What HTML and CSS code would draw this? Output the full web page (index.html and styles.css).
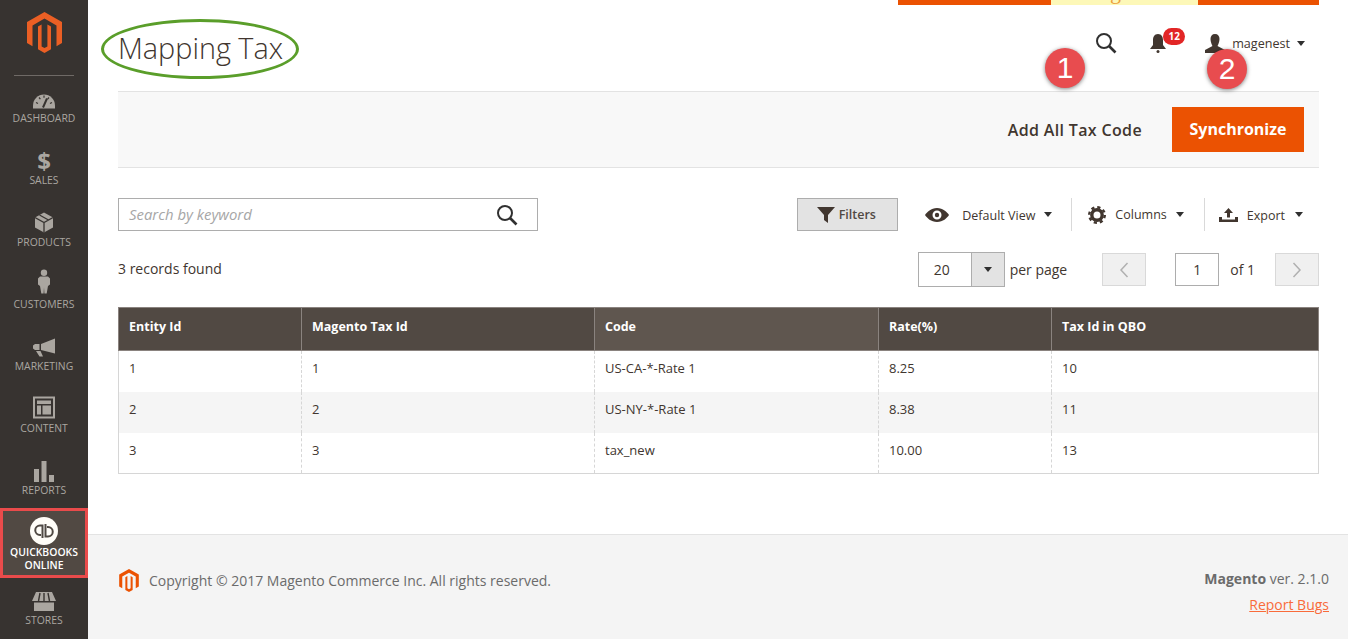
FILE: index.html
```html
<!DOCTYPE html>
<html lang="en">
  <head>
    <meta charset="UTF-8" />
    <meta name="viewport" content="width=device-width, initial-scale=1.0" />
    <title>Mapping Tax / Magento Admin</title>
    <link rel="stylesheet" href="styles.css">
  </head>
  <body>
    <nav class="sidebar">
      <div class="side-logo">
        <svg class="logo-big" viewBox="0 0 35 41"><path fill="#eb5f24" d="M17.5 0 35 10V31L29.5 34.2V13.4L17.5 6.500 5.5 13.4V34.2L0 31V10Z M11 14.6 14.6 12.5V34.4L17.5 36 20.4 34.4V12.5L24 14.6V37.3L17.5 41 11 37.3Z"/></svg>
      </div>

      <a class="nav-item">
        <svg class="nav-icon icon-dashboard" width="22" height="16" viewBox="0 0 22 16"><path fill="#aaa6a0" d="M0 16V13A11 11 0 0 1 22 13V16Z"/><path stroke="#373330" stroke-width="1.2" d="M3 10 5 11M6 5 7.4 6.6M11 3V5.2M16 5 14.6 6.6M19 10 17 11"/><path stroke="#373330" stroke-width="2" d="M10 15 14 6"/></svg>
        <span>Dashboard</span>
      </a>
      <a class="nav-item">
        <span class="nav-glyph">$</span>
        <span>Sales</span>
      </a>
      <a class="nav-item">
        <svg class="nav-icon icon-products" width="18" height="20" viewBox="0 0 18 20"><path fill="#aaa6a0" d="M9 0 18 5V15L9 20 0 15V5Z"/><path stroke="#373330" stroke-width="1.3" fill="none" d="M0 5 9 10 18 5M9 10V20M4.5 2.5 13.5 7.5"/></svg>
        <span>Products</span>
      </a>
      <a class="nav-item">
        <svg class="nav-icon icon-customers" width="12" height="24" viewBox="0 0 12 24"><circle fill="#aaa6a0" cx="6" cy="3.2" r="3.2"/><path fill="#aaa6a0" d="M2 7H10L12 9V15L10 16.5 8.7 24H6.4L6 18 5.6 24H3.3L2 16.5 0 15V9Z"/></svg>
        <span>Customers</span>
      </a>
      <a class="nav-item">
        <svg class="nav-icon" width="22" height="18" viewBox="0 0 22 18"><path fill="#aaa6a0" d="M22 0V15L8 11.5V5.5ZM6.5 5.5V11.5H2L0 10V7L2 5.5ZM3 12.5H7.5L10 18H6.5Z"/></svg>
        <span>Marketing</span>
      </a>
      <a class="nav-item">
        <svg class="nav-icon icon-content" width="22" height="22" viewBox="0 0 22 22"><path fill="#aaa6a0" fill-rule="evenodd" d="M0 0H22V22H0ZM2 2V20H20V2Z"/><path fill="#aaa6a0" d="M4 4H18V7.5H4ZM4 9H8V18H4ZM9.5 9H18V18H9.5Z"/></svg>
        <span>Content</span>
      </a>
      <a class="nav-item">
        <svg class="nav-icon" width="20" height="21" viewBox="0 0 20 21"><path fill="#aaa6a0" d="M0 8H5V21H0ZM7.5 0H12.5V21H7.5ZM15 14H20V21H15Z"/></svg>
        <span>Reports</span>
      </a>

      <a class="nav-item nav-active">
        <svg class="qb-icon" width="28" height="28" viewBox="0 0 28 28"><circle fill="#fffdf8" cx="14" cy="14" r="14"/><g fill="none" stroke="#4f4842" stroke-width="2"><path d="M12.5 21V8.5H10A4.5 4.5 0 0 0 10 18H11"/><path d="M15.5 7V19.500H18A4.5 4.5 0 0 0 18 10H17"/></g></svg>
        <span>Quickbooks<br>Online</span>
      </a>

      <a class="nav-item nav-last">
        <svg class="nav-icon" width="24" height="19" viewBox="0 0 24 19"><path fill="#aaa6a0" d="M4 0H20L24 9H0ZM2 10.5H22V19H2Z"/><path stroke="#373330" stroke-width="1.4" d="M8 1 6.5 9M12 1V9M16 1 17.5 9"/></svg>
        <span>Stores</span>
      </a>
    </nav>

    <div class="main">
      <div class="strip">
        <span class="strip-orange strip-first"></span>
        <span class="strip-yellow"><span class="strip-g">g</span></span>
        <span class="strip-orange strip-last"></span>
      </div>

      <header class="page-head">
        <h1>Mapping Tax</h1>
        <div class="head-actions">
          <svg class="head-search" width="22" height="22" viewBox="0 0 22 22"><circle cx="9" cy="9" r="7" fill="none" stroke="#303030" stroke-width="2"/><path stroke="#303030" stroke-width="2.6" d="M14 14 20.5 20.5"/></svg>
          <div class="bell">
            <svg width="18" height="19" viewBox="0 0 18 19"><path fill="#41362f" d="M9 0C12.5 0 14 3 14 6V11L17 15H1L4 11V6C4 3 5.500 0 9 0Z"/><circle fill="#41362f" cx="9" cy="17.500" r="1.500"/></svg>
            <span class="badge">12</span>
          </div>
          <div class="user">
            <svg width="20" height="19" viewBox="0 0 20 19"><path fill="#41362f" d="M10 0C13 0 14.500 2 14.500 5 14.500 8 13 11 12.500 12L20 16V19H0V16L7.500 12C7 11 5.500 8 5.500 5 5.500 2 7 0 10 0Z"/></svg>
            <span>magenest</span>
            <i class="caret"></i>
          </div>
        </div>
      </header>

      <section class="action-bar">
        <a class="btn-plain">Add All Tax Code</a>
        <a class="btn-primary">Synchronize</a>
      </section>

      <section class="toolbar">
        <div class="search-box">
          <span class="placeholder">Search by keyword</span>
          <svg width="22" height="22" viewBox="0 0 22 22"><circle cx="9" cy="9" r="7" fill="none" stroke="#303030" stroke-width="2"/><path stroke="#303030" stroke-width="2.6" d="M14 14 20.500 20.500"/></svg>
        </div>
        <div class="tools">
          <a class="btn-filters">
            <svg width="18" height="16" viewBox="0 0 18 16"><path fill="#41362f" d="M0 0H18L11 8V16L7 13V8Z"/></svg>
            Filters
          </a>
          <a class="tool tool-view">
            <svg width="24" height="14" viewBox="0 0 24 14"><path fill="#41362f" fill-rule="evenodd" d="M12 0C18 0 22 4 24 7 22 10 18 14 12 14 6 14 2 10 0 7 2 4 6 0 12 0ZM12 2.500A4.500 4.500 0 1 0 12 11.500 4.500 4.500 0 0 0 12 2.500Z"/><circle fill="#41362f" cx="12" cy="7" r="2.200"/></svg>
            <span>Default View</span><i class="caret"></i>
          </a>
          <a class="tool tool-columns">
            <svg width="18" height="18" viewBox="0 0 18 18"><circle cx="9" cy="9" r="5.200" fill="none" stroke="#41362f" stroke-width="3.400"/><circle cx="9" cy="9" r="7.800" fill="none" stroke="#41362f" stroke-width="2.400" stroke-dasharray="3.200 2.930"/></svg>
            <span>Columns</span><i class="caret"></i>
          </a>
          <a class="tool tool-export">
            <svg width="19" height="14" viewBox="0 0 19 14"><path fill="#41362f" d="M9.500 0 14 5H11V9.500H8V5H5ZM0 9H3V11.500H16V9H19V14H0Z"/></svg>
            <span>Export</span><i class="caret"></i>
          </a>
        </div>
      </section>

      <section class="pager-row">
        <span class="records">3 records found</span>
        <div class="pager">
          <div class="per-select">
            <span class="per-value">20</span>
            <span class="per-arrow"><i class="caret"></i></span>
          </div>
          <span class="per-label">per page</span>
          <a class="page-btn page-prev"><svg width="10" height="16" viewBox="0 0 10 16"><path fill="none" stroke="#b0b0b0" stroke-width="1.500" d="M8.500 1 2 8 8.500 15"/></svg></a>
          <span class="page-input">1</span>
          <span class="page-of">of 1</span>
          <a class="page-btn page-next"><svg width="10" height="16" viewBox="0 0 10 16"><path fill="none" stroke="#b0b0b0" stroke-width="1.500" d="M1.500 1 8 8 1.500 15"/></svg></a>
        </div>
      </section>

      <table class="grid">
        <thead>
          <tr>
            <th class="col-entity">Entity Id</th>
            <th class="col-magento">Magento Tax Id</th>
            <th class="col-code">Code</th>
            <th class="col-rate">Rate(%)</th>
            <th>Tax Id in QBO</th>
          </tr>
        </thead>
        <tbody>
          <tr><td>1</td><td>1</td><td>US-CA-*-Rate 1</td><td>8.25</td><td>10</td></tr>
          <tr><td>2</td><td>2</td><td>US-NY-*-Rate 1</td><td>8.38</td><td>11</td></tr>
          <tr><td>3</td><td>3</td><td>tax_new</td><td>10.00</td><td>13</td></tr>
        </tbody>
      </table>

      <footer class="footer">
        <div class="copyright">
          <svg width="20" height="23" viewBox="0 0 35 41"><path fill="#eb5202" d="M17.500 0 35 10V31L29.500 34.200V13.400L17.500 6.500 5.500 13.400V34.200L0 31V10Z M11 14.600 14.600 12.500V34.400L17.500 36 20.400 34.400V12.500L24 14.600V37.300L17.500 41 11 37.300Z"/></svg>
          <span>Copyright © 2017 Magento Commerce Inc. All rights reserved.</span>
        </div>
        <div class="version">
          <p><strong>Magento</strong> ver. 2.1.0</p>
          <a>Report Bugs</a>
        </div>
      </footer>

      <!-- annotations drawn over the screenshot -->
      <span class="mark-ellipse"></span>
      <span class="mark-num mark-one">1</span>
      <span class="mark-num mark-two">2</span>
    </div>
  </body>
</html>
```

FILE: styles.css
```css
* {
    box-sizing: border-box;
}
html, body {
    height: 100%;
}
body {
    font-family: "Open Sans", sans-serif;
    color: #303030;
    background-color: #fff;
    margin: 0;
    display: flex;
    overflow: hidden;
}
.caret {
    display: inline-block;
    width: 0;
    height: 0;
    border-left: 4px solid transparent;
    border-right: 4px solid transparent;
    border-top: 5px solid #303030;
}

/* sidebar */
.sidebar {
    width: 88px;
    flex: none;
    height: 639px;
    background-color: #373330;
    display: flex;
    flex-direction: column;
    align-items: center;
}
.side-logo {
    width: 60px;
    height: 76px;
    flex: none;
    padding-top: 12px;
    margin-bottom: 11px;
    border-bottom: 1px solid #6f6a66;
    display: flex;
    justify-content: center;
}
.logo-big {
    width: 35px;
    height: 41px;
}
.nav-item {
    width: 100%;
    height: 62px;
    flex: none;
    display: flex;
    flex-direction: column;
    align-items: center;
    justify-content: flex-start;
    color: #aaa6a0;
    font-size: 10.4px;
    line-height: 13px;
    text-transform: uppercase;
    text-align: center;
}
.nav-icon {
    height: 25px;
    flex: none;
}
.icon-dashboard {
    position: relative;
    top: 1px;
}
.icon-products {
    margin-top: -1px;
    margin-bottom: 1px;
}
.icon-customers {
    margin-top: -4px;
    margin-bottom: 4px;
}
.icon-content {
    margin-top: -2px;
    margin-bottom: 2px;
}
.nav-glyph {
    height: 25px;
    font-size: 24px;
    line-height: 24px;
    font-weight: 700;
}
.nav-active {
    height: 70px;
    margin-top: -13px;
    padding-top: 6px;
    background-color: #514943;
    border: 3px solid #e94b4b;
    color: #fff;
    font-weight: 600;
}
.qb-icon {
    flex: none;
    margin-bottom: 1px;
}
.nav-last {
    height: 61px;
    padding-top: 11px;
}

/* main column */
.main {
    flex: 1;
    min-width: 0;
    height: 639px;
    position: relative;
    display: flex;
    flex-direction: column;
}
.strip {
    height: 5px;
    padding-right: 29px;
    display: flex;
    justify-content: flex-end;
    flex: none;
}
.strip-orange {
    background-color: #eb5202;
}
.strip-first {
    width: 153px;
}
.strip-last {
    width: 121px;
}
.strip-yellow {
    width: 147px;
    background-color: #fdf8b8;
    overflow: hidden;
    padding-left: 59px;
}
.strip-g {
    display: block;
    font-family: "Liberation Serif", serif;
    font-size: 22px;
    line-height: 22px;
    margin-top: -19px;
    color: #ec9f3c;
}
.page-head {
    height: 86px;
    flex: none;
    margin: 0 29px 0 30px;
    display: flex;
    justify-content: space-between;
    align-items: flex-start;
}
h1 {
    margin: 22px 0 0;
    font-size: 28.8px;
    line-height: 42px;
    font-weight: 300;
    color: #41362f;
}
.head-actions {
    display: flex;
    align-items: center;
    padding-top: 27px;
    padding-right: 14px;
}
.head-search {
    margin-right: 32px;
}
.bell {
    position: relative;
    width: 18px;
    height: 19px;
    margin-right: 38px;
}
.badge {
    position: absolute;
    left: 14px;
    top: -6px;
    width: 22px;
    height: 17px;
    border-radius: 9px;
    background-color: #e22626;
    color: #fff;
    font-size: 10px;
    line-height: 17px;
    font-weight: 700;
    text-align: center;
}
.user {
    display: flex;
    align-items: center;
    font-size: 12.6px;
    color: #41362f;
}
.user span {
    margin: 0 7px;
}
.action-bar {
    height: 77px;
    flex: none;
    margin: 0 29px 0 30px;
    padding-right: 15px;
    background-color: #f8f8f8;
    border-top: 1px solid #e3e3e3;
    border-bottom: 1px solid #e3e3e3;
    display: flex;
    align-items: center;
    justify-content: flex-end;
    gap: 30px;
}
.btn-plain {
    font-size: 16px;
    font-weight: 600;
    letter-spacing: 0.35px;
    color: #41362f;
}
.btn-primary {
    width: 132px;
    height: 45px;
    background-color: #eb5202;
    color: #fff;
    font-size: 16px;
    font-weight: 700;
    line-height: 45px;
    text-align: center;
}
.toolbar {
    margin: 30px 29px 0 30px;
    height: 33px;
    flex: none;
    display: flex;
    justify-content: space-between;
}
.search-box {
    width: 420px;
    height: 33px;
    border: 1px solid #adadad;
    padding: 0 19px 0 10px;
    display: flex;
    align-items: center;
    justify-content: space-between;
}
.placeholder {
    font-size: 14.9px;
    font-style: italic;
    color: #a6a6a6;
    margin-bottom: 2px;
}
.tools {
    display: flex;
    align-items: center;
    padding-right: 16px;
}
.btn-filters {
    width: 101px;
    height: 33px;
    padding-right: 3px;
    background-color: #e3e3e3;
    border: 1px solid #adadad;
    display: flex;
    align-items: center;
    justify-content: center;
    gap: 4px;
    font-size: 12.5px;
    font-weight: 600;
    color: #514943;
}
.tool {
    height: 33px;
    display: flex;
    align-items: center;
    font-size: 12.5px;
    color: #41362f;
}
.tool span {
    margin-right: 9px;
}
.tool-view {
    margin-left: 27px;
    padding-right: 19px;
    border-right: 1px solid #d9d9d9;
}
.tool-view svg {
    margin-right: 13px;
}
.tool-view span, .tool-export span {
    margin-top: 2px;
}
.tool-columns {
    padding-left: 16px;
    padding-right: 20px;
    border-right: 1px solid #d9d9d9;
}
.tool-columns svg {
    margin-right: 9px;
}
.tool-export {
    padding-left: 14px;
}
.tool-export svg {
    margin-right: 9px;
}
.tool-export span {
    margin-right: 10px;
}
.pager-row {
    margin: 21px 29px 0 30px;
    height: 35px;
    flex: none;
    display: flex;
    justify-content: space-between;
    align-items: center;
}
.records {
    font-size: 14px;
    color: #41362f;
    margin-bottom: 2px;
}
.pager {
    display: flex;
    align-items: center;
    font-size: 14px;
    color: #41362f;
}
.per-select {
    width: 87px;
    height: 35px;
    border: 1px solid #adadad;
    display: flex;
}
.per-value {
    flex: 1;
    padding-left: 15px;
    line-height: 33px;
}
.per-arrow {
    width: 33px;
    background-color: #e3e3e3;
    border-left: 1px solid #adadad;
    display: flex;
    align-items: center;
    justify-content: center;
}
.per-label {
    margin: 0 35px 0 5px;
}
.page-btn {
    width: 44px;
    height: 33px;
    background-color: #f0f0f0;
    border: 1px solid #d9d9d9;
    display: flex;
    align-items: center;
    justify-content: center;
}
.page-input {
    width: 44px;
    height: 33px;
    margin-left: 29px;
    border: 1px solid #adadad;
    line-height: 31px;
    text-align: center;
}
.page-of {
    margin: 0 20px 0 11px;
}
.grid {
    margin: 20px 29px 0 30px;
    width: 1201px;
    flex: none;
    border-collapse: collapse;
    table-layout: fixed;
    font-size: 13px;
    border: 1px solid #d6d6d6;
}
.grid th {
    height: 43px;
    padding: 0 10px 6px;
    background-color: #514943;
    border: 1px solid #8a837f;
    color: #fff;
    font-size: 12.5px;
    font-weight: 700;
    text-align: left;
}
.grid th.col-code {
    background-color: #5f564f;
}
.col-entity {
    width: 183px;
}
.col-magento {
    width: 293px;
}
.col-code {
    width: 284px;
}
.col-rate {
    width: 173px;
}
.grid td {
    height: 41px;
    padding: 0 10px 6px;
    color: #41362f;
    border-left: 1px dashed #d6d6d6;
    border-right: 1px dashed #d6d6d6;
}
.grid tbody tr:nth-child(2) td {
    background-color: #f5f5f5;
}
.footer {
    margin-top: auto;
    height: 105px;
    flex: none;
    background-color: #f4f4f4;
    border-top: 1px solid #e3e3e3;
    padding: 33px 19px 0 31px;
    display: flex;
    justify-content: space-between;
    align-items: flex-start;
    font-size: 14px;
    color: #6b6b6b;
}
.copyright {
    display: flex;
    align-items: center;
    gap: 10px;
    margin-top: 1px;
}
.version {
    text-align: right;
}
.version p {
    margin: 1px 0 7px;
}
.version a {
    color: #f96b3a;
    text-decoration: underline;
}

/* annotations */
.mark-ellipse {
    position: absolute;
    left: 13px;
    top: 19px;
    width: 198px;
    height: 60px;
    border: 3px solid #5a9e2a;
    border-radius: 50%;
}
.mark-num {
    position: absolute;
    width: 40px;
    height: 40px;
    border-radius: 50%;
    background-color: #e84c4f;
    box-shadow: 0 1px 4px rgba(0, 0, 0, 0.5);
    color: #fff;
    font-family: "Liberation Sans", sans-serif;
    font-size: 30px;
    line-height: 40px;
    text-align: center;
}
.mark-one {
    left: 957px;
    top: 48px;
}
.mark-two {
    left: 1119px;
    top: 49px;
}
```
